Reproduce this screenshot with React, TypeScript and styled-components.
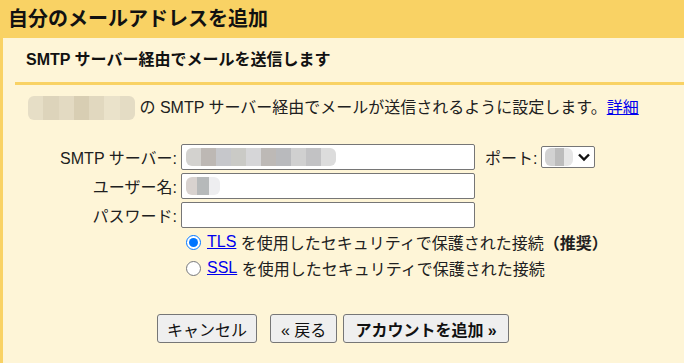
import React from "react";
import styled, { createGlobalStyle } from "styled-components";

const FONT = `"Liberation Sans", Arial, "Noto Sans CJK JP", sans-serif`;
const YELLOW = "#f9d264";
const CREAM = "#fef5d7";

const Global = createGlobalStyle`
  html, body { margin: 0; padding: 0; background: ${CREAM}; }
  body { font-family: ${FONT}; color: #202020; }
  * { box-sizing: border-box; }
`;

const Page = styled.div`
  width: 684px;
  height: 363px;
  background: ${CREAM};
  display: flex;
  flex-direction: column;
  overflow: hidden;
`;

const Header = styled.h1`
  margin: 0;
  height: 38px;
  background: ${YELLOW};
  padding-left: 8px;
  font-size: 20px;
  font-weight: bold;
  line-height: 38px;
  color: #111;
`;

const Main = styled.div`
  flex: 1;
  border-left: 3px solid ${YELLOW};
  padding-left: 12px;
  display: flex;
  flex-direction: column;
`;

const SubHeader = styled.h2`
  margin: 0;
  height: 47px;
  padding-left: 11px;
  font-size: 16px;
  font-weight: bold;
  line-height: 44px;
  border-bottom: 3px solid ${YELLOW};
  color: #111;
`;

const Content = styled.div`
  padding-left: 13px;
  display: flex;
  flex-direction: column;
`;

const Description = styled.p`
  margin: 11px 0 0;
  font-size: 16px;
  line-height: 24px;
  display: flex;
  align-items: center;
  white-space: nowrap;
`;

const Link = styled.a`
  color: #0000ee;
  text-decoration: underline;
`;

const Mosaic = styled.span<{ $w: number; $h: number }>`
  display: inline-grid;
  grid-auto-flow: column;
  width: ${(p) => p.$w}px;
  height: ${(p) => p.$h}px;
  filter: blur(0.6px);
  border-radius: 6px;
  overflow: hidden;
`;

const Cell = styled.span<{ $c: string }>`
  background: ${(p) => p.$c};
`;

const Form = styled.div`
  margin-top: 24px;
  display: flex;
  flex-direction: column;
  gap: 3px;
`;

const Row = styled.div`
  display: flex;
  align-items: center;
  height: 26px;
  font-size: 16px;
`;

const Label = styled.label`
  width: 149px;
  text-align: right;
  white-space: nowrap;
  margin-right: 4px;
`;

const TextBox = styled.div<{ $h?: number }>`
  width: 294px;
  height: ${(p) => p.$h ?? 26}px;
  background: #fff;
  border: 1px solid #767676;
  border-radius: 2px;
  display: flex;
  align-items: center;
  padding-left: 4px;
`;

const PortLabel = styled.span`
  margin-left: 10px;
  margin-right: 4px;
  white-space: nowrap;
`;

const Select = styled.div`
  width: 54px;
  height: 22px;
  background: #fff;
  border: 1px solid #767676;
  border-radius: 2px;
  display: flex;
  align-items: center;
  justify-content: space-between;
  padding: 0 3px 0 3px;
`;

const Radios = styled.div`
  margin-top: 1px;
  padding-left: 153px;
  display: flex;
  flex-direction: column;
`;

const RadioRow = styled.label`
  display: flex;
  align-items: center;
  height: 26px;
  font-size: 16px;
  white-space: nowrap;
  input {
    width: 15px;
    height: 15px;
    margin: 0 6px 0 5px;
    accent-color: #0075ff;
  }
`;

const Buttons = styled.div`
  margin-top: 33px;
  padding-left: 129px;
  display: flex;
  align-items: center;
`;

const Button = styled.button<{ $bold?: boolean; $gap?: number; $px?: number }>`
  height: 29px;
  padding: 0 ${(p) => p.$px ?? 9}px;
  margin-right: ${(p) => p.$gap ?? 0}px;
  font-family: ${FONT};
  font-size: 16px;
  font-weight: ${(p) => (p.$bold ? "bold" : "normal")};
  color: #111;
  background: #efefef;
  border: 1px solid #767676;
  border-radius: 3px;
  white-space: nowrap;
`;

const Chevron = () => (
  <svg width="14" height="10" viewBox="0 0 14 10">
    <path d="M2 2.5 L7 7.5 L12 2.5" fill="none" stroke="#111" strokeWidth="2.4" />
  </svg>
);

const blur = (cols: string[], w: number, h: number) => (
  <Mosaic $w={w} $h={h}>
    {cols.map((c, i) => (
      <Cell key={i} $c={c} />
    ))}
  </Mosaic>
);

export default function App() {
  return (
    <>
      <Global />
      <Page>
        <Header>自分のメールアドレスを追加</Header>
        <Main>
          <SubHeader>SMTP サーバー経由でメールを送信します</SubHeader>
          <Content>
            <Description>
              {blur(["#e6dec6", "#ddd4bb", "#e3dac2", "#d8ceb3", "#e1d8bf", "#eae2ca", "#e4dcc4"], 107, 24)}
              &nbsp;の SMTP サーバー経由でメールが送信されるように設定します。
              <Link href="#">詳細</Link>
            </Description>
            <Form>
              <Row>
                <Label>SMTP サーバー:</Label>
                <TextBox>
                  {blur(["#d3d2cf", "#bdb8b4", "#c6c7cb", "#cacac6", "#d6d6d8", "#bdb9b6", "#b9babd", "#d0d0d0", "#c2c2c4", "#dcdcdc"], 150, 18)}
                </TextBox>
                <PortLabel>ポート:</PortLabel>
                <Select>
                  {blur(["#d2d2d2", "#bcbcbc", "#e6e6e6"], 28, 18)}
                  <Chevron />
                </Select>
              </Row>
              <Row>
                <Label>ユーザー名:</Label>
                <TextBox>{blur(["#d8d2cf", "#b6b9ba", "#eeeef0"], 34, 18)}</TextBox>
              </Row>
              <Row>
                <Label>パスワード:</Label>
                <TextBox />
              </Row>
            </Form>
            <Radios>
              <RadioRow>
                <input type="radio" name="sec" defaultChecked />
                <Link href="#">TLS</Link>&nbsp;を使用したセキュリティで保護された接続<b>（推奨）</b>
              </RadioRow>
              <RadioRow>
                <input type="radio" name="sec" />
                <Link href="#">SSL</Link>&nbsp;を使用したセキュリティで保護された接続
              </RadioRow>
            </Radios>
            <Buttons>
              <Button $gap={13}>キャンセル</Button>
              <Button $gap={6} $px={10}>« 戻る</Button>
              <Button $bold $px={11}>アカウントを追加 »</Button>
            </Buttons>
          </Content>
        </Main>
      </Page>
    </>
  );
}
